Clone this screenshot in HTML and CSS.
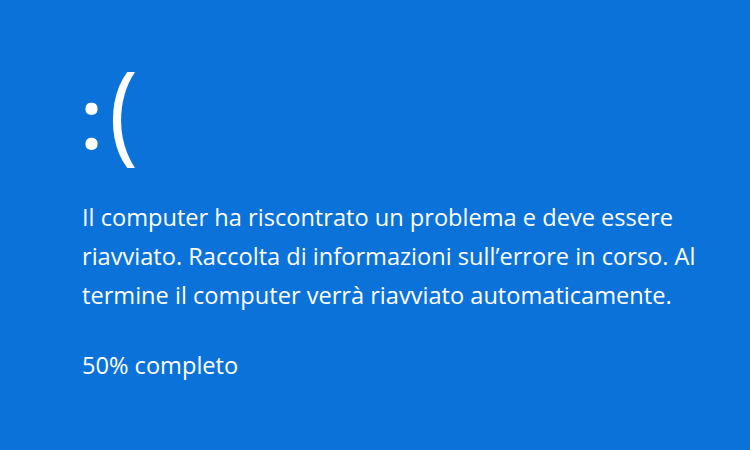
FILE: index.html
```html
<!DOCTYPE html>
<html lang="it">
<head>
<meta charset="utf-8">
<title>Errore</title>
<link rel="stylesheet" href="styles.css">
</head>
<body>
<main class="screen">
  <div class="face"><span class="colon">:</span><span class="paren">(</span></div>
  <p class="message">Il computer ha riscontrato un problema e deve essere riavviato. Raccolta di informazioni sull’errore in corso. Al termine il computer verrà riavviato automaticamente.</p>
  <p class="progress">50% completo</p>
</main>
</body>
</html>
```
FILE: styles.css
```css
html, body {
  margin: 0;
  padding: 0;
  width: 750px;
  height: 450px;
  overflow: hidden;
  background: #0b72d9;
}
.screen {
  box-sizing: border-box;
  width: 750px;
  height: 450px;
  padding: 57px 0 0 82px;
  color: #ffffff;
  font-family: "Open Sans", "Noto Sans", sans-serif;
  display: flex;
  flex-direction: column;
}
.face {
  height: 125px;
  font-size: 84px;
  line-height: 120px;
  white-space: nowrap;
}
.colon {
  font-weight: 600;
  margin-left: -2px;
  margin-right: 6px;
}
.paren {
  display: inline-block;
  font-size: 109px;
  font-weight: 400;
  line-height: 0;
  vertical-align: -2px;
  transform: scaleX(0.9);
  transform-origin: left center;
}
.message {
  margin: 16px 0 0 0;
  width: 640px;
  font-size: 23.6px;
  line-height: 39px;
}
.progress {
  margin: 31px 0 0 0;
  font-size: 23.6px;
  line-height: 39px;
}
```
